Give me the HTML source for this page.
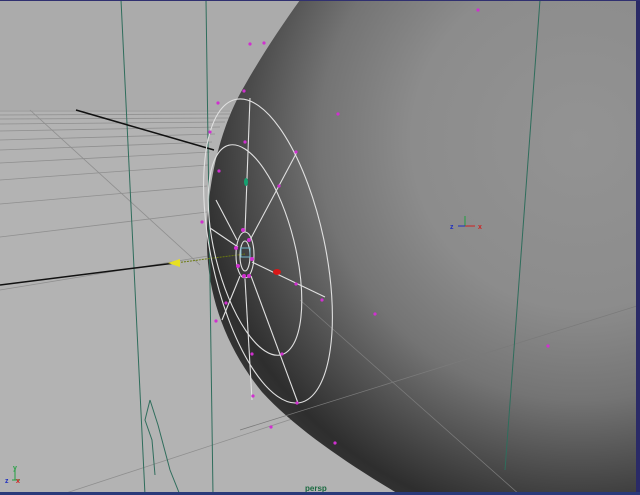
<!DOCTYPE html>
<html><head><style>
html,body{margin:0;padding:0;width:640px;height:495px;overflow:hidden;background:#b2b2b2}
svg{display:block}
text{font-family:"Liberation Sans",sans-serif;font-weight:bold}
</style></head><body>
<svg width="640" height="495" viewBox="0 0 640 495" xmlns="http://www.w3.org/2000/svg">
<defs>
<radialGradient id="sph" cx="580" cy="140" r="420" gradientUnits="userSpaceOnUse">
<stop offset="0" stop-color="#939393"/>
<stop offset="0.4" stop-color="#8c8c8c"/>
<stop offset="0.62" stop-color="#747474"/>
<stop offset="0.8" stop-color="#4a4a4a"/>
<stop offset="0.92" stop-color="#2e2e2e"/>
<stop offset="1" stop-color="#383838"/>
</radialGradient>
</defs>
<rect width="640" height="495" fill="#b3b3b3"/>
<rect width="640" height="110" fill="#ababab"/>
<g stroke="#8f8f8f" stroke-width="0.8" fill="none">
<line x1="0" y1="111" x2="230" y2="111"/>
<line x1="0" y1="115" x2="230" y2="114"/>
<line x1="0" y1="119" x2="230" y2="118"/>
<line x1="0" y1="124" x2="225" y2="122"/>
<line x1="0" y1="131" x2="220" y2="127"/>
<line x1="0" y1="140" x2="215" y2="134"/>
<line x1="0" y1="150" x2="212" y2="142"/>
<line x1="0" y1="163" x2="210" y2="152"/>
<line x1="0" y1="180" x2="208" y2="165"/>
<line x1="0" y1="204" x2="207" y2="186"/>
<line x1="0" y1="237" x2="207" y2="212"/>
<line x1="0" y1="290" x2="208" y2="256"/>
<line x1="30" y1="110" x2="200" y2="265"/>
<line x1="60" y1="495" x2="640" y2="305"/>
<line x1="290" y1="300" x2="520" y2="495"/>
</g>
<path d="M300,0 L640,0 L640,495 L400,495 C345,462 295,428 262,392 C228,350 208,300 207,245 C206,190 218,130 245,85 C262,55 282,25 300,0 Z" fill="url(#sph)"/>
<g stroke="#7a7a7a" stroke-width="0.8" fill="none">
<line x1="240" y1="430" x2="640" y2="305"/>
<line x1="300" y1="300" x2="520" y2="495"/>
</g>
<g stroke="#2f6d5c" stroke-width="1" fill="none">
<line x1="121" y1="0" x2="145" y2="495"/>
<line x1="206" y1="0" x2="213" y2="495"/>
<line x1="540" y1="0" x2="505" y2="470"/>
<polyline points="150,400 145,420 152,440 155,475"/>
<polyline points="150,400 158,425 170,470 180,495"/>
</g>
<line x1="76" y1="110" x2="214" y2="150" stroke="#111" stroke-width="1.5"/>
<line x1="0" y1="285" x2="175" y2="263" stroke="#111" stroke-width="1.5"/>
<line x1="175" y1="263" x2="245" y2="254" stroke="#6b7a10" stroke-width="1" stroke-dasharray="2,1"/>
<path d="M168,263 l12,-4 l0,8 z" fill="#e8e020"/>
<g stroke="#e0e0e0" stroke-width="1.1" fill="none">
<ellipse cx="268" cy="251" rx="57" ry="155" transform="rotate(-12 268 251)"/>
<ellipse cx="255" cy="250" rx="40" ry="108" transform="rotate(-14 255 250)"/>
<ellipse cx="245" cy="255" rx="9" ry="23"/>
<ellipse cx="245" cy="256" rx="5" ry="15"/>
<path d="M245,232 L250,98"/>
<path d="M250,240 L297,152"/>
<path d="M210,228 L238,247 M252,262 L325,297"/>
<path d="M251,276 L298,403"/>
<path d="M245,279 L252,400"/>
<path d="M240,276 L222,320"/>
<path d="M237,240 L216,200"/>
</g>
<rect x="241" y="248" width="9" height="9" fill="none" stroke="#6fb4c8" stroke-width="1"/>
<ellipse cx="277" cy="272" rx="4" ry="3" fill="#d81818"/>
<ellipse cx="246" cy="182" rx="2" ry="4" fill="#16a070"/>
<g fill="#d030d0">
<circle cx="478" cy="10" r="1.6"/><circle cx="250" cy="44" r="1.6"/><circle cx="264" cy="43" r="1.6"/>
<circle cx="244" cy="91" r="1.6"/><circle cx="218" cy="103" r="1.6"/><circle cx="338" cy="114" r="1.6"/>
<circle cx="210" cy="132" r="1.6"/><circle cx="296" cy="152" r="1.6"/><circle cx="219" cy="171" r="1.6"/>
<circle cx="245" cy="142" r="1.6"/><circle cx="279" cy="186" r="1.6"/><circle cx="202" cy="222" r="1.6"/>
<circle cx="243" cy="230" r="2"/><circle cx="249" cy="240" r="2"/><circle cx="236" cy="248" r="2"/>
<circle cx="252" cy="259" r="2"/><circle cx="238" cy="266" r="2"/>
<circle cx="244" cy="276" r="2"/><circle cx="249" cy="276" r="2"/><circle cx="296" cy="284" r="1.6"/>
<circle cx="322" cy="300" r="1.6"/>
<circle cx="226" cy="303" r="1.6"/><circle cx="216" cy="321" r="1.6"/><circle cx="375" cy="314" r="1.6"/>
<circle cx="548" cy="346" r="1.6"/><circle cx="282" cy="354" r="1.6"/><circle cx="252" cy="354" r="1.6"/>
<circle cx="297" cy="403" r="1.6"/><circle cx="253" cy="396" r="1.6"/><circle cx="271" cy="427" r="1.6"/>
<circle cx="335" cy="443" r="1.6"/>
</g>
<g stroke-width="1">
<line x1="465" y1="226" x2="475" y2="226" stroke="#d02020"/>
<line x1="465" y1="226" x2="465" y2="216" stroke="#20a040"/>
<line x1="465" y1="226" x2="458" y2="226" stroke="#2030c0"/>
</g>
<text x="450" y="229" font-size="7" fill="#2030c0">z</text>
<text x="478" y="229" font-size="7" fill="#d02020">x</text>
<line x1="15" y1="480" x2="15" y2="470" stroke="#20a040"/>
<line x1="12" y1="480" x2="20" y2="480" stroke="#20a040"/>
<text x="13" y="470" font-size="7" fill="#20a040">y</text>
<text x="5" y="483" font-size="7" fill="#2030c0">z</text>
<text x="16" y="483" font-size="7" fill="#d02020">x</text>
<text x="305" y="491" font-size="8" fill="#1a6a40">persp</text>
<rect x="636" y="0" width="4" height="495" fill="#2a2a66"/>
<rect x="0" y="492" width="640" height="3" fill="#2a3a7a"/>
<rect x="0" y="0" width="640" height="1" fill="#303070"/>
</svg>
</body></html>
